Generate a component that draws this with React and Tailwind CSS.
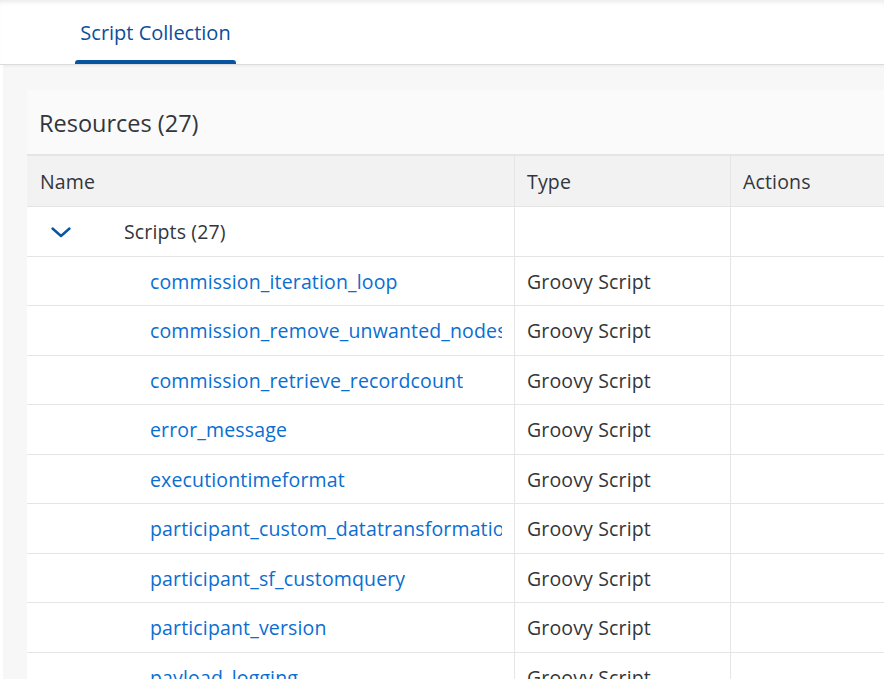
const SCRIPTS = [
  'commission_iteration_loop',
  'commission_remove_unwanted_nodes',
  'commission_retrieve_recordcount',
  'error_message',
  'executiontimeformat',
  'participant_custom_datatransformation',
  'participant_sf_customquery',
  'participant_version',
  'payload_logging',
  'payload_validation',
];

const FONT = { fontFamily: '"Open Sans", "Noto Sans", Arial, sans-serif' };

export default function App() {
  return (
    <div className="h-[679px] w-[884px] overflow-hidden bg-white pl-[3px]" style={FONT}>
      {/* tab header */}
      <div className="h-[65px] bg-white border-b border-[#dcdcdc] shadow-[inset_0_5px_5px_-3px_rgba(0,0,0,0.09)] pl-[75px] flex items-end relative z-10 -ml-[3px]">
        <div className="flex flex-col items-center">
          <span className="text-[20px] text-[#0a4e9b] px-[5px] leading-none pb-[17px]">Script Collection</span>
          <div className="h-[4px] w-[161px] bg-[#0854a0] rounded-t-[3px]" />
        </div>
      </div>

      {/* content */}
      <div className="h-[614px] bg-[#f7f7f7] shadow-[inset_0_3px_3px_-2px_rgba(0,0,0,0.06)] pl-[24px] pt-[25px]">
        <div className="w-[900px] bg-white">
          <div className="h-[66px] bg-[#fafafa] border-b-2 border-[#e5e5e5] flex items-center pl-[12px] pt-[3px]">
            <span className="text-[23.5px] text-[#32363a]">Resources (27)</span>
          </div>

          <div className="grid grid-cols-[488px_216px_1fr] h-[51px] bg-[#f2f2f2] border-b border-[#e5e5e5] text-[19.5px] tracking-[0.15px] text-[#32363a]">
            <div className="flex items-center pl-[13px] pt-[1px] border-r border-[#e5e5e5]">Name</div>
            <div className="flex items-center pl-[12px] pt-[1px] border-r border-[#e5e5e5]">Type</div>
            <div className="flex items-center pl-[12px] pt-[1px]">Actions</div>
          </div>

          <div className="grid grid-cols-[488px_216px_1fr] h-[49.5px] border-b border-[#e5e5e5] text-[19.5px] tracking-[0.15px] text-[#32363a]">
            <div className="flex items-center border-r border-[#e5e5e5] pt-[1px]">
              <svg className="ml-[23px] w-[22px] h-[12px] text-[#0854a0]" viewBox="0 0 22 12" fill="none" stroke="currentColor" strokeWidth={2.4} strokeLinecap="round" strokeLinejoin="round">
                <path d="M2.5 2.5 L11 10 L19.5 2.5" />
              </svg>
              <span className="ml-[52px]">Scripts (27)</span>
            </div>
            <div className="border-r border-[#e5e5e5]" />
            <div />
          </div>

          {SCRIPTS.map((name) => (
            <div
              key={name}
              className="grid grid-cols-[488px_216px_1fr] h-[49.5px] border-b border-[#e5e5e5] text-[19.5px] tracking-[0.15px]"
            >
              <div className="flex items-center border-r border-[#e5e5e5] pl-[123px] pr-[12px] pt-[1px] overflow-hidden">
                <span className="whitespace-nowrap overflow-hidden text-[#0a6ed1]">{name}</span>
              </div>
              <div className="flex items-center pl-[12px] pt-[1px] border-r border-[#e5e5e5] text-[#32363a]">Groovy Script</div>
              <div />
            </div>
          ))}
        </div>
      </div>
    </div>
  );
}
